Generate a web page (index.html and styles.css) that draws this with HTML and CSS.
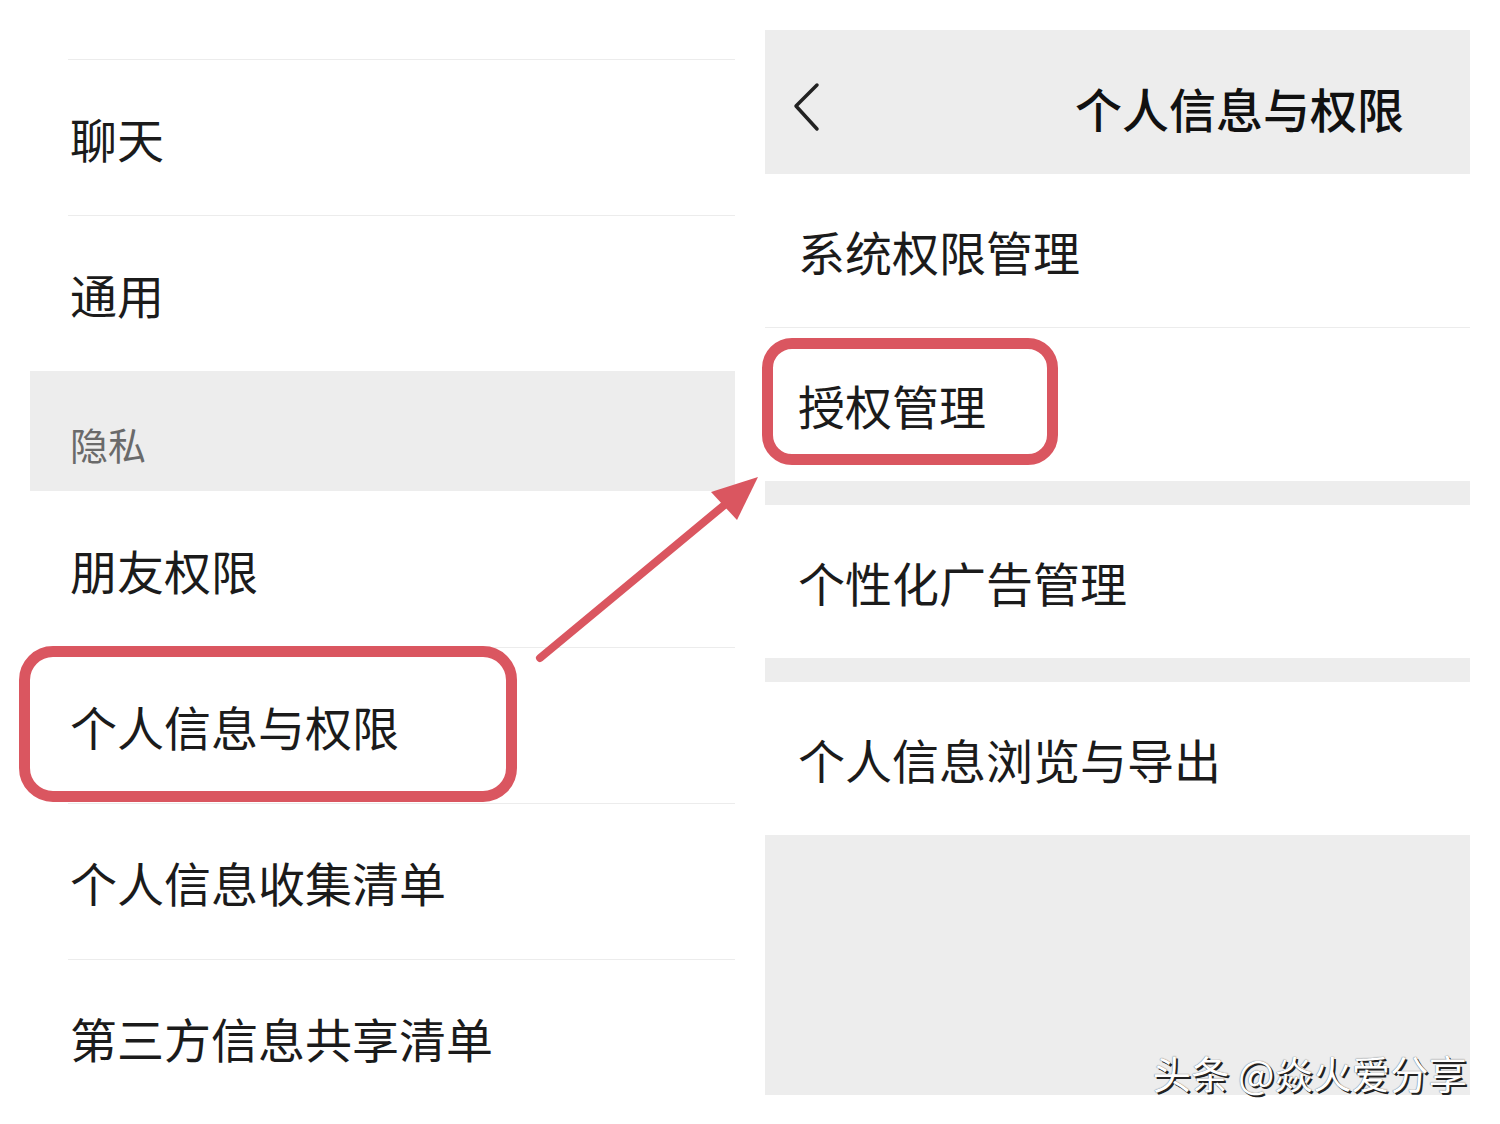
FILE: index.html
```html
<!DOCTYPE html>
<html lang="zh-CN">
<head>
    <meta charset="UTF-8">
    <meta name="viewport" content="width=device-width, initial-scale=1.0">
    <title>个人信息与权限</title>
    <link rel="stylesheet" href="styles.css">
</head>
<body>
    <div class="page">
        <!-- left: settings list -->
        <div class="panel panel-left">
            <div class="row line">聊天</div>
            <div class="row line">通用</div>
            <div class="section">隐私</div>
            <div class="row">朋友权限</div>
            <div class="row line">
                <span class="mark mark-left"></span>
                个人信息与权限
            </div>
            <div class="row line">个人信息收集清单</div>
            <div class="row line">第三方信息共享清单</div>
        </div>

        <!-- right: detail page -->
        <div class="panel panel-right">
            <div class="header">
                <svg class="back" width="30" height="50" viewBox="0 0 30 50">
                    <polyline points="24,3 3,24 24,47" fill="none" stroke="#222" stroke-width="3.5" stroke-linecap="round" stroke-linejoin="round"/>
                </svg>
                <div class="title">个人信息与权限</div>
            </div>
            <div class="item">系统权限管理</div>
            <div class="item line">
                <span class="mark mark-right"></span>
                授权管理
            </div>
            <div class="gap"></div>
            <div class="item">个性化广告管理</div>
            <div class="gap"></div>
            <div class="item">个人信息浏览与导出</div>
            <div class="filler">
                <span class="watermark">头条 @焱火爱分享</span>
            </div>
        </div>

        <svg class="arrow" width="1500" height="1124" viewBox="0 0 1500 1124">
            <line x1="540" y1="658" x2="728" y2="502" stroke="#da5660" stroke-width="8" stroke-linecap="round"/>
            <polygon points="758,477 711,492 737,520" fill="#da5660"/>
        </svg>
    </div>
</body>
</html>
```

FILE: styles.css
```css
body {
    margin: 0;
    background-color: #fff;
    font-family: "Noto Sans CJK SC", "Noto Sans", sans-serif;
    color: #1b1b1b;
}

.page {
    position: relative;
    display: flex;
    gap: 30px;
    width: 1500px;
    height: 1124px;
    padding-left: 30px;
    box-sizing: border-box;
    overflow: hidden;
}

.panel {
    width: 705px;
    display: flex;
    flex-direction: column;
}

.panel-left {
    padding-top: 59px;
}

.panel-right {
    padding-top: 30px;
}

/* left list rows */
.row {
    position: relative;
    height: 156px;
    box-sizing: border-box;
    margin-left: 38px;
    padding-left: 2px;
    display: flex;
    align-items: center;
    font-size: 47px;
    line-height: 1;
}

.line {
    border-top: 1px solid #ececec;
}

.section {
    height: 120px;
    background-color: #ededed;
    display: flex;
    align-items: center;
    padding-left: 40px;
    padding-top: 24px;
    box-sizing: border-box;
    font-size: 38px;
    color: #6a6a6a;
}

/* right page */
.header {
    height: 144px;
    box-sizing: border-box;
    padding-top: 10px;
    background-color: #ededed;
    display: flex;
    align-items: center;
    padding-left: 28px;
}

.title {
    margin-left: auto;
    padding-right: 66px;
    font-size: 47px;
    font-weight: 500;
    color: #111;
}

.item {
    position: relative;
    height: 153px;
    box-sizing: border-box;
    display: flex;
    align-items: center;
    padding-left: 33px;
    font-size: 47px;
    line-height: 1;
}

.item.line {
    height: 154px;
}

.gap {
    height: 24px;
    background-color: #ededed;
}

.filler {
    height: 260px;
    background-color: #ededed;
    display: flex;
    align-items: flex-end;
    justify-content: flex-end;
}

.watermark {
    font-size: 38.5px;
    line-height: 1;
    color: #fff;
    padding: 0 3px 4px 0;
    text-shadow: 2px 2px 0 #222, 0 0 1px #333;
}

/* red annotations */
.mark {
    position: absolute;
    border: 11px solid #da5660;
    border-radius: 34px;
    box-sizing: border-box;
}

.mark-left {
    left: -49px;
    top: -2px;
    width: 498px;
    height: 156px;
}

.mark-right {
    left: -3px;
    top: 10px;
    width: 296px;
    height: 127px;
    border-radius: 30px;
}

.arrow {
    position: absolute;
    left: 0;
    top: 0;
    pointer-events: none;
}
```
